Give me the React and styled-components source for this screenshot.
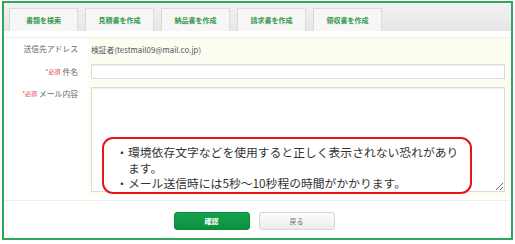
import React from "react";
import styled, { createGlobalStyle } from "styled-components";

const GlobalStyle = createGlobalStyle`
  html, body {
    margin: 0;
    padding: 0;
    background: #fff;
    font-family: "Noto Sans CJK JP", "Noto Sans", sans-serif;
  }
`;

const Frame = styled.div`
  box-sizing: border-box;
  margin: 1px 0 0 2px;
  width: 511px;
  height: 239px;
  border: 2px solid #2fa55e;
  display: flex;
  flex-direction: column;
  background: #fff;
`;

const TabBar = styled.div`
  height: 28px;
  display: flex;
  align-items: flex-end;
  gap: 7px;
  padding-left: 5px;
  background: linear-gradient(#f2f2f2, #e6e6e6);
`;

const Tab = styled.div`
  box-sizing: border-box;
  width: 69px;
  height: 23px;
  display: flex;
  align-items: center;
  justify-content: center;
  background: ${({ active }) => (active ? "#fff" : "#f6f6f6")};
  border: 1px solid #dcdcdc;
  border-bottom: none;
  color: #34984a;
  font-size: 7px;
  font-weight: bold;
`;

const Form = styled.div`
  margin-top: 6px;
  margin-right: 2px;
  padding-bottom: 4px;
  border-top: 1px solid #eef0e0;
  border-bottom: 1px solid #eef0e0;
  display: grid;
  grid-template-columns: 84px 1fr;
  grid-template-rows: 22px 23px 113px;
`;

const Label = styled.div`
  display: flex;
  justify-content: flex-end;
  align-items: ${({ top }) => (top ? "flex-start" : "center")};
  padding: ${({ top }) => (top ? "7px 10px 0 0" : "0 10px 0 0")};
  color: #666;
  font-size: 7.8px;
  line-height: 8px;
  white-space: nowrap;
`;

const Required = styled.span`
  color: #e0404a;
  font-size: 6px;
  margin-right: 2px;
`;

const Cell = styled.div`
  position: relative;
  background: #fdfdf2;
  display: flex;
  align-items: ${({ top }) => (top ? "stretch" : "center")};
  padding: ${({ pad }) => pad || "0 3px"};
  color: #555;
  font-size: 7.8px;
`;

const TextInput = styled.input`
  box-sizing: border-box;
  width: 414px;
  height: 15px;
  border: 1px solid #dcdcdc;
  box-shadow: inset 0 1px 1px #eee;
  background: #fff;
  outline: none;
  padding: 0 3px;
`;

const TextArea = styled.textarea`
  box-sizing: border-box;
  width: 414px;
  height: 105px;
  border: 1px solid #dcdcdc;
  box-shadow: inset 0 1px 1px #eee;
  background: #fff;
  outline: none;
  margin: 0;
`;

const Notice = styled.ul`
  position: absolute;
  left: 14px;
  top: 54px;
  box-sizing: border-box;
  width: 370px;
  height: 57px;
  margin: 0;
  padding: 5px 0 0 16px;
  list-style: none;
  border: 2px solid #e8141c;
  border-radius: 11px;
  background: #fff;
  font-family: "Noto Sans CJK JP", sans-serif;
  font-size: 11.8px;
  line-height: 15.5px;
  color: #333;
`;

const NoticeItem = styled.li`
  width: 338px;
  padding-left: 8px;
  text-indent: -8px;
  &::before {
    content: "・";
    display: inline-block;
    width: 8px;
    text-indent: 0;
    margin-left: -4px;
    margin-right: 4px;
  }
`;

const Footer = styled.div`
  flex: 1;
  display: flex;
  justify-content: center;
  align-items: center;
  gap: 9px;
  padding-right: 7px;
`;

const Button = styled.button`
  box-sizing: border-box;
  width: 76px;
  height: 18px;
  border-radius: 3px;
  font-family: "Noto Sans CJK JP", sans-serif;
  font-size: 7px;
  font-weight: ${({ primary }) => (primary ? "bold" : "normal")};
  color: ${({ primary }) => (primary ? "#fff" : "#777")};
  background: ${({ primary }) =>
    primary ? "linear-gradient(#16a24f, #0b9140)" : "linear-gradient(#fdfdfd, #ececec)"};
  border: 1px solid ${({ primary }) => (primary ? "#0b8a3c" : "#d4d4d4")};
  padding: 0;
  margin-top: 2px;
`;

const tabs = ["書類を検索", "見積書を作成", "納品書を作成", "請求書を作成", "領収書を作成"];

export default function App() {
  return (
    <>
      <GlobalStyle />
      <Frame>
        <TabBar>
          {tabs.map((t) => (
            <Tab key={t}>{t}</Tab>
          ))}
        </TabBar>
        <Form>
          <Label>送信先アドレス</Label>
          <Cell>検証者(testmail09@mail.co.jp)</Cell>
          <Label>
            <Required>*必須</Required>件名
          </Label>
          <Cell>
            <TextInput />
          </Cell>
          <Label top>
            <Required>*必須</Required>メール内容
          </Label>
          <Cell top pad="4px 3px 0">
            <TextArea />
            <Notice>
              <NoticeItem>環境依存文字などを使用すると正しく表示されない恐れがあります。</NoticeItem>
              <NoticeItem>メール送信時には5秒～10秒程の時間がかかります。</NoticeItem>
            </Notice>
          </Cell>
        </Form>
        <Footer>
          <Button primary>確認</Button>
          <Button>戻る</Button>
        </Footer>
      </Frame>
    </>
  );
}
